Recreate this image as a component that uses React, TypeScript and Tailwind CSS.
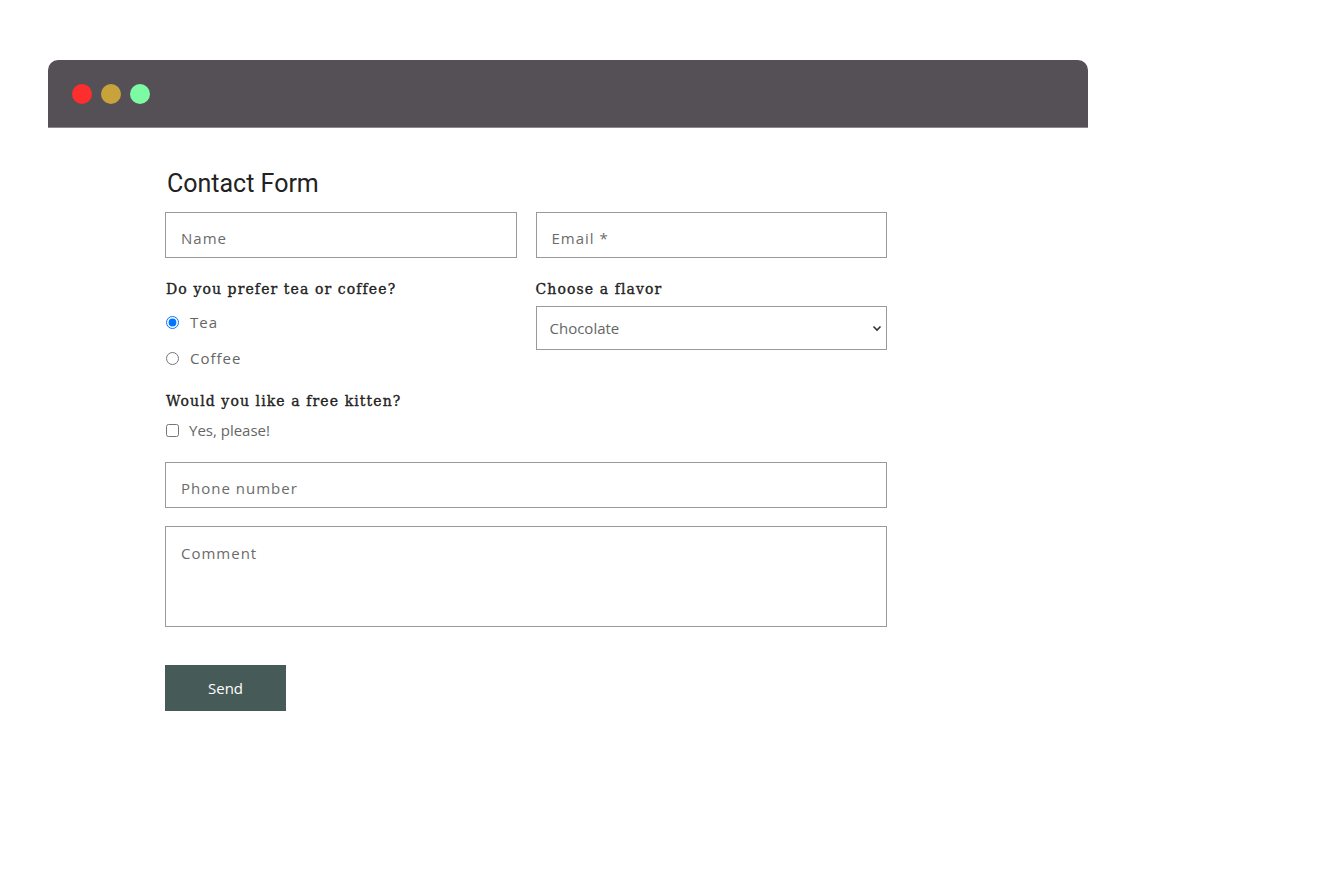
import React from 'react';

const sans = { fontFamily: '"Open Sans", "Noto Sans", sans-serif' };
const slab = { fontFamily: '"DejaVu Serif", "Liberation Serif", serif' };

export default function App() {
  return (
    <div className="min-h-screen bg-white pt-[60px] pl-[48px]">
      <div className="w-[1040px]">
        {/* Window title bar */}
        <div className="h-[68px] rounded-t-[10px] bg-[#555056] border-b border-[#8a8a8a] flex items-center gap-[9px] pl-[24px]">
          <span className="w-[20px] h-[20px] rounded-full bg-[#ff2e2e]" />
          <span className="w-[20px] h-[20px] rounded-full bg-[#c8a23b]" />
          <span className="w-[20px] h-[20px] rounded-full bg-[#7dfaa4]" />
        </div>

        <form className="ml-[117px] w-[722px] pt-[40px]" style={sans}>
          <h2
            className="text-[25px] leading-[32px] text-[#222] pl-[2px] mb-[12px]"
            style={{ fontFamily: 'Roboto, "Noto Sans", sans-serif' }}
          >
            Contact Form
          </h2>

          <div className="grid grid-cols-2 gap-x-[19px]">
            <input
              className="h-[46px] border border-[#9a9a9a] px-[15px] pt-[6px] text-[15px] tracking-[1px] placeholder:text-[#6b6b6b] outline-none"
              placeholder="Name"
            />
            <input
              className="h-[46px] border border-[#9a9a9a] px-[15px] pt-[6px] text-[15px] tracking-[1px] placeholder:text-[#6b6b6b] outline-none"
              placeholder="Email *"
            />

            <div className="pt-[21px]">
              <div className="pl-[1px] text-[14px] leading-[20px] text-[#222] tracking-[1.1px] [-webkit-text-stroke:0.35px_#222]" style={slab}>
                Do you prefer tea or coffee?
              </div>
              <label className="flex items-center gap-[11px] mt-[12px] h-[22px] text-[15px] tracking-[1px] text-[#666]">
                <input type="radio" name="drink" defaultChecked className="w-[13px] h-[13px] m-0 ml-[1px]" />
                Tea
              </label>
              <label className="flex items-center gap-[11px] mt-[14px] h-[22px] text-[15px] tracking-[1px] text-[#666]">
                <input type="radio" name="drink" className="w-[13px] h-[13px] m-0 ml-[1px]" />
                Coffee
              </label>
            </div>

            <div className="pt-[21px]">
              <div className="text-[14px] leading-[20px] text-[#222] tracking-[1.1px] [-webkit-text-stroke:0.35px_#222]" style={slab}>
                Choose a flavor
              </div>
              <div className="relative mt-[7px]">
                <select
                  defaultValue="Chocolate"
                  className="appearance-none w-full h-[44px] border border-[#9a9a9a] bg-white pl-[13px] text-[15px] text-[#666] outline-none"
                >
                  <option>Chocolate</option>
                  <option>Vanilla</option>
                  <option>Strawberry</option>
                </select>
                <svg
                  className="absolute right-[5px] top-[18px] pointer-events-none"
                  width="10"
                  height="8"
                  viewBox="0 0 10 8"
                  fill="none"
                  stroke="#333"
                  strokeWidth="1.6"
                >
                  <path d="M1.5 2.5 L5 6 L8.5 2.5" />
                </svg>
              </div>
            </div>
          </div>

          <div className="mt-[22px] pl-[1px] text-[14px] leading-[20px] text-[#222] tracking-[1.1px] [-webkit-text-stroke:0.35px_#222]" style={slab}>
            Would you like a free kitten?
          </div>
          <label className="flex items-center gap-[10px] mt-[8px] h-[22px] text-[15px] text-[#666]">
            <input type="checkbox" className="w-[13px] h-[13px] m-0 ml-[1px]" />
            Yes, please!
          </label>

          <input
            className="mt-[21px] w-full h-[46px] border border-[#9a9a9a] px-[15px] pt-[6px] text-[15px] tracking-[1px] placeholder:text-[#6b6b6b] outline-none"
            placeholder="Phone number"
          />
          <textarea
            className="block mt-[18px] w-full h-[101px] border border-[#9a9a9a] px-[15px] py-[15px] text-[15px] tracking-[1px] placeholder:text-[#6b6b6b] outline-none resize-none"
            placeholder="Comment"
          />

          <button
            type="button"
            className="mt-[38px] w-[121px] h-[46px] bg-[#465a58] text-white text-[15px]"
          >
            Send
          </button>
        </form>
      </div>
    </div>
  );
}
